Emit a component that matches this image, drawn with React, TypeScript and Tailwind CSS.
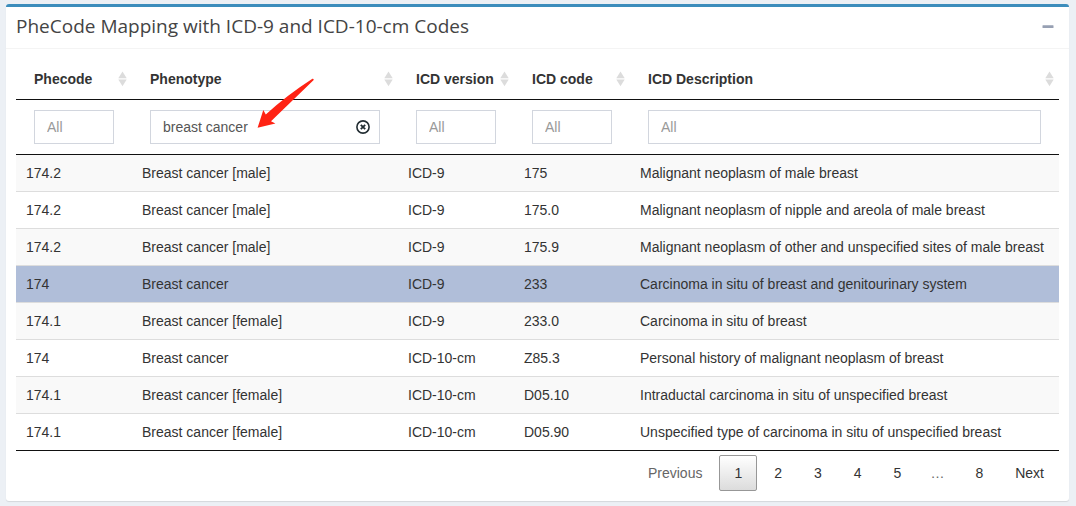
import { useState } from "react";

type Row = [string, string, string, string, string];

const rows: Row[] = [
  ["174.2", "Breast cancer [male]", "ICD-9", "175", "Malignant neoplasm of male breast"],
  ["174.2", "Breast cancer [male]", "ICD-9", "175.0", "Malignant neoplasm of nipple and areola of male breast"],
  ["174.2", "Breast cancer [male]", "ICD-9", "175.9", "Malignant neoplasm of other and unspecified sites of male breast"],
  ["174", "Breast cancer", "ICD-9", "233", "Carcinoma in situ of breast and genitourinary system"],
  ["174.1", "Breast cancer [female]", "ICD-9", "233.0", "Carcinoma in situ of breast"],
  ["174", "Breast cancer", "ICD-10-cm", "Z85.3", "Personal history of malignant neoplasm of breast"],
  ["174.1", "Breast cancer [female]", "ICD-10-cm", "D05.10", "Intraductal carcinoma in situ of unspecified breast"],
  ["174.1", "Breast cancer [female]", "ICD-10-cm", "D05.90", "Unspecified type of carcinoma in situ of unspecified breast"],
];

const columns = ["Phecode", "Phenotype", "ICD version", "ICD code", "ICD Description"];

function SortIcon() {
  return (
    <svg width="9" height="16" viewBox="0 0 9 16" className="shrink-0 fill-[#dcdcdc]" aria-hidden="true">
      <path d="M4.5 0.5 L8.7 7.3 H0.3 Z" />
      <path d="M0.3 8.5 H8.7 L4.5 15.3 Z" />
    </svg>
  );
}

function ClearIcon() {
  return (
    <svg width="14" height="14" viewBox="0 0 14 14" fill="none" stroke="#222d32" aria-hidden="true">
      <circle cx="7" cy="7" r="6.1" strokeWidth="1.6" />
      <path d="M4.8 4.8 L9.2 9.2 M9.2 4.8 L4.8 9.2" strokeWidth="1.8" />
    </svg>
  );
}

function Arrow() {
  return (
    <svg
      width="58"
      height="52"
      viewBox="0 0 58 52"
      className="pointer-events-none absolute -top-8 left-[107px] z-10 fill-[#ff2314]"
      aria-hidden="true"
    >
      <path d="M0.6 49.8 L6.3 32 L8.8 36.4 Q31 16.5 55.4 0.8 Q56.8 0.6 56.7 1.9 L14 43.3 L18.4 45.4 Z" />
    </svg>
  );
}

function Filter({ label, initial }: { label: string; initial: string }) {
  const [value, setValue] = useState(initial);
  return (
    <div className="relative">
      <input
        type="text"
        aria-label={`Filter ${label}`}
        placeholder="All"
        value={value}
        onChange={(e) => setValue(e.target.value)}
        className="block h-[34px] w-full border border-[#d2d6de] bg-white px-3 text-sm text-[#555] outline-none placeholder:text-[#999]"
      />
      {value !== "" && (
        <button
          type="button"
          aria-label={`Clear ${label}`}
          onClick={() => setValue("")}
          className="absolute inset-y-0 right-2.5 flex items-center"
        >
          <ClearIcon />
        </button>
      )}
      {initial !== "" && <Arrow />}
    </div>
  );
}

function PageButton({ label, current = false, disabled = false }: { label: string; current?: boolean; disabled?: boolean }) {
  return (
    <button
      type="button"
      disabled={disabled}
      aria-current={current ? "page" : undefined}
      className={
        current
          ? "rounded-xs border border-[#979797] bg-linear-to-b from-white to-[#dcdcdc] px-3.5 py-[7px] leading-5"
          : "rounded-xs border border-transparent px-3.5 py-[7px] leading-5 disabled:text-[#666]"
      }
    >
      {label}
    </button>
  );
}

export default function App() {
  return (
    <div className="min-h-screen bg-[#ecf0f5] py-1 pr-[7px] pl-1.5 font-['Liberation_Sans',Arial,sans-serif] text-sm text-[#333]">
      <section className="rounded-[3px] border-t-3 border-[#3c8dbc] bg-white shadow-[0_1px_1px_rgba(0,0,0,0.1)]">
        <header className="flex items-center justify-between border-b border-[#f4f4f4] px-2.5 pt-[7px] pb-2.5">
          <h3 className="font-['Open_Sans','Noto_Sans',sans-serif] text-[19px] leading-6 text-[#444]">
            PheCode Mapping with ICD-9 and ICD-10-cm Codes
          </h3>
          <button type="button" aria-label="Collapse" className="px-[5px] py-1">
            <svg width="12" height="12" viewBox="0 0 12 12" aria-hidden="true">
              <rect x="0.5" y="5.3" width="11" height="2.7" rx="0.5" fill="#97a0b3" />
            </svg>
          </button>
        </header>

        <div className="p-2.5">
          <table className="w-full table-fixed border-separate border-spacing-0">
            <colgroup>
              <col className="w-[116px]" />
              <col className="w-[266px]" />
              <col className="w-[116px]" />
              <col className="w-[116px]" />
              <col />
            </colgroup>
            <thead>
              <tr>
                {columns.map((c) => (
                  <th key={c} className="border-b border-[#111] py-2.5 pr-[5px] pl-[18px] text-left font-bold">
                    <button type="button" className="flex w-full items-center justify-between leading-5 whitespace-nowrap">
                      {c}
                      <SortIcon />
                    </button>
                  </th>
                ))}
              </tr>
              <tr>
                {columns.map((c) => (
                  <td key={c} className="border-b border-[#111] px-[18px] py-2.5">
                    <Filter label={c} initial={c === "Phenotype" ? "breast cancer" : ""} />
                  </td>
                ))}
              </tr>
            </thead>
            <tbody>
              {rows.map((row, i) => (
                <tr key={row[3]} className={i === 3 ? "bg-[#b0bed9]" : "odd:bg-[#f9f9f9]"}>
                  {row.map((cell, j) => (
                    <td
                      key={columns[j]}
                      className={
                        i === rows.length - 1
                          ? "border-b border-[#111] px-2.5 py-2 leading-5"
                          : "border-b border-[#ddd] px-2.5 py-2 leading-5"
                      }
                    >
                      {cell}
                    </td>
                  ))}
                </tr>
              ))}
            </tbody>
          </table>

          <nav aria-label="Table pages" className="flex justify-end gap-0.5 pt-1">
            <PageButton label="Previous" disabled />
            <PageButton label="1" current />
            <PageButton label="2" />
            <PageButton label="3" />
            <PageButton label="4" />
            <PageButton label="5" />
            <span className="py-2 pr-3.5 pl-3 leading-5 text-[#666]">…</span>
            <PageButton label="8" />
            <PageButton label="Next" />
          </nav>
        </div>
      </section>
    </div>
  );
}
